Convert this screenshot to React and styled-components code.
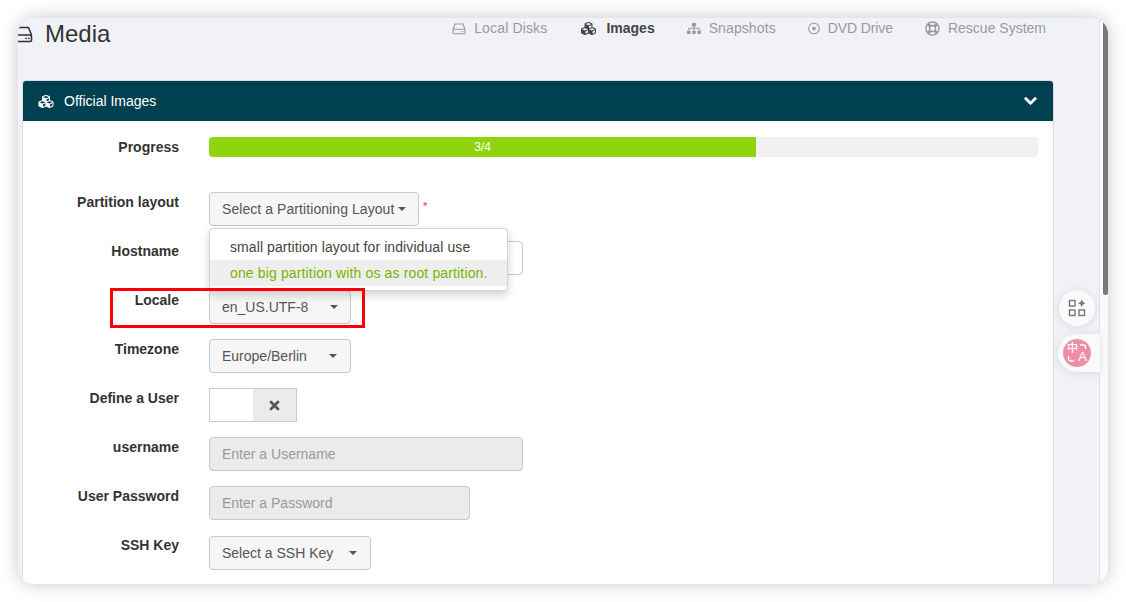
import React from 'react';
import styled, { createGlobalStyle } from 'styled-components';
import { FaCubes, FaSitemap, FaRegDotCircle, FaRegLifeRing, FaChevronDown } from 'react-icons/fa';

const Global = createGlobalStyle`
  html, body { margin: 0; padding: 0; background: #fff; overflow: hidden; }
  body { font-family: "Liberation Sans", Arial, sans-serif; font-size: 14px; color: #333; }
`;

const Stage = styled.div`
  padding: 18px;
  height: 566px;
`;
const Window = styled.div`
  position: relative;
  width: 1090px;
  height: 566px;
  display: flex;
  overflow: hidden;
  border-radius: 16px;
  background: #f1f2f7;
  box-shadow: 0 0 18px rgba(0, 0, 0, 0.22);
`;
const Main = styled.main`
  flex: 1;
  min-width: 0;
  padding-left: 5px;
  padding-right: 46px;
  border-right: 1px solid #e2e3e8;
`;
const Track = styled.div`
  width: 8px;
  background: #fafafa;
  display: flex;
  justify-content: flex-end;
`;
const Thumb = styled.div`
  width: 5px;
  height: 277px;
  background: #787878;
  border-radius: 0 0 3px 3px;
`;
const TopBar = styled.header`
  height: 63px;
  display: flex;
  align-items: flex-start;
  justify-content: space-between;
  margin-right: -46px;
  padding-right: 53px;
`;
const Title = styled.h1`
  margin: 0 0 0 -10px;
  padding-top: 2px;
  display: flex;
  align-items: center;
  gap: 12px;
  font-size: 24px;
  line-height: 28px;
  font-weight: 400;
  color: #333;
  svg { width: 20px; height: 20px; }
`;
const Tabs = styled.nav`
  display: flex;
  gap: 32px;
  padding-top: 2px;
`;
const Tab = styled.span`
  display: flex;
  align-items: center;
  gap: 8px;
  height: 16px;
  font-size: 14px;
  line-height: 16px;
  letter-spacing: ${p => p.$ls || 0}px;
  font-weight: ${p => (p.$active ? 700 : 400)};
  color: ${p => (p.$active ? '#444' : '#9a9a9a')};
  svg { width: ${p => p.$iw}px; height: 15px; }
`;
const Panel = styled.section`
  background: #fff;
  border-radius: 3px 3px 0 0;
  box-shadow: 0 0 0 1px #dcdde3;
  height: 503px;
`;
const PanelHead = styled.div`
  height: 40px;
  background: #004050;
  color: #fff;
  border-radius: 3px 3px 0 0;
  display: flex;
  align-items: center;
  padding: 0 15px 0 14px;
  gap: 9px;
  font-size: 14px;
  svg { width: 18px; height: 15px; }
`;
const Chevron = styled(FaChevronDown)`
  margin-left: auto;
  && { width: 15px; height: 14px; }
  stroke: #fff;
  stroke-width: 30px;
`;
const PanelBody = styled.div`
  padding: 16px 15px 0 0;
  display: flex;
  flex-direction: column;
  gap: 15px;
`;
const Row = styled.div`
  display: grid;
  grid-template-columns: 156px 1fr;
  column-gap: 30px;
  height: ${p => (p.$h ? p.$h : 34)}px;
  margin-bottom: ${p => p.$mb || 0}px;
  position: relative;
`;
const Label = styled.label`
  text-align: right;
  font-weight: 700;
  font-size: 14px;
  line-height: 20px;
  color: #333;
`;
const Bar = styled.div`
  height: 20px;
  background: #f1f1f1;
  border-radius: 4px;
  overflow: hidden;
`;
const BarFill = styled.div`
  height: 100%;
  background: #8fd40c;
  color: #fff;
  font-size: 12px;
  line-height: 20px;
  text-align: center;
`;
const Control = styled.div`
  display: flex;
  align-items: flex-start;
  gap: 4px;
  position: relative;
  padding-top: ${p => p.$pt || 0}px;
`;
const Select = styled.div`
  box-sizing: border-box;
  width: ${p => p.$w}px;
  height: 34px;
  display: flex;
  align-items: center;
  justify-content: space-between;
  padding: 0 ${p => p.$pr || 12}px 0 12px;
  background: #f6f6f6;
  border: 1px solid #c8c8c8;
  border-radius: 4px;
  color: #555;
  font-size: 14px;
  letter-spacing: ${p => p.$ls || 0}px;
`;
const Caret = styled.i`
  width: 0;
  height: 0;
  border-left: 4px solid transparent;
  border-right: 4px solid transparent;
  border-top: 4px solid #555;
`;
const Star = styled.span`
  color: #e33;
  font-size: 11px;
  line-height: 28px;
`;
const Input = styled.div`
  box-sizing: border-box;
  width: ${p => p.$w}px;
  height: 34px;
  padding: 0 12px;
  display: flex;
  align-items: center;
  background: ${p => (p.$disabled ? '#ebebeb' : '#fff')};
  border: 1px solid #c8c8c8;
  border-radius: 4px;
  color: #999;
  font-size: 14px;
`;
const Toggle = styled.div`
  box-sizing: border-box;
  width: 88px;
  height: 34px;
  border: 1px solid #ccc;
  display: flex;
  background: #fff;
`;
const ToggleOff = styled.div`
  margin-left: auto;
  width: 43px;
  background: #ebebeb;
  display: flex;
  align-items: center;
  justify-content: center;
`;
const Menu = styled.ul`
  position: absolute;
  z-index: 3;
  left: 0;
  top: 36px;
  box-sizing: border-box;
  width: 299px;
  height: 63px;
  margin: 0;
  padding: 5px 0;
  list-style: none;
  background: #fff;
  border: 1px solid #d4d4d4;
  border-radius: 4px;
  box-shadow: 0 4px 10px rgba(0, 0, 0, 0.18);
`;
const MenuItem = styled.li`
  height: 26px;
  line-height: 26px;
  padding-left: 20px;
  font-size: 14px;
  letter-spacing: ${p => (p.$active ? 0.14 : 0.09)}px;
  white-space: nowrap;
  color: ${p => (p.$active ? '#76b500' : '#444')};
  background: ${p => (p.$active ? '#eeeeee' : 'transparent')};
`;
const Annotation = styled.div`
  position: absolute;
  z-index: 4;
  left: 92px;
  top: 270px;
  width: 255px;
  height: 40px;
  box-sizing: border-box;
  border: 3px solid #f00;
  pointer-events: none;
`;
const Floating = styled.div`
  position: absolute;
  z-index: 5;
  left: 1041px;
  top: 272px;
  width: 36px;
  height: 36px;
  border-radius: 50%;
  background: #fafafb;
  box-shadow: 0 1px 8px rgba(0, 0, 0, 0.1);
  display: flex;
  align-items: center;
  justify-content: center;
`;
const Translate = styled.div`
  position: absolute;
  z-index: 5;
  left: 1040px;
  top: 316px;
  width: 42px;
  height: 38px;
  border-radius: 19px 0 0 19px;
  background: #fafafb;
  box-shadow: 0 1px 8px rgba(0, 0, 0, 0.1);
  display: flex;
  align-items: center;
  padding-left: 5px;
  box-sizing: border-box;
`;
const Badge = styled.div`
  position: relative;
  width: 28px;
  height: 28px;
  border-radius: 50%;
  background: #ee8fa9;
  color: #fff;
  line-height: 1;
  svg { position: absolute; inset: 0; }
`;
const BadgeHan = styled.span`
  position: absolute;
  left: 4px;
  top: 3px;
  font-size: 11px;
  font-weight: 500;
  font-family: "Noto Sans CJK SC", sans-serif;
`;
const BadgeLatin = styled.span`
  position: absolute;
  right: 4px;
  bottom: 4px;
  font-size: 13px;
  font-weight: 400;
`;

const HddIcon = () => (
  <svg viewBox="0 0 20 20" fill="none" stroke="currentColor" strokeWidth="1.6">
    <path d="M1.5 11 L4.5 3.5 H15.5 L18.5 11" />
    <rect x="1.5" y="11" width="17" height="6.5" rx="1.2" />
    <circle cx="13" cy="14.3" r="0.9" fill="currentColor" stroke="none" />
    <circle cx="15.8" cy="14.3" r="0.9" fill="currentColor" stroke="none" />
  </svg>
);

const tabs = [
  [HddIcon, 'Local Disks', 14, false, 0.15],
  [FaCubes, 'Images', 19, true, 0],
  [FaSitemap, 'Snapshots', 14, false, 0.1],
  [FaRegDotCircle, 'DVD Drive', 12, false, -0.1],
  [FaRegLifeRing, 'Rescue System', 15, false, 0],
];

export default function App() {
  return (
    <Stage>
      <Global />
      <Window>
        <Main>
          <TopBar>
            <Title><HddIcon />Media</Title>
            <Tabs>
              {tabs.map(([Icon, text, iw, active, ls]) => (
                <Tab key={text} $active={active} $iw={iw} $ls={ls}><Icon />{text}</Tab>
              ))}
            </Tabs>
          </TopBar>
          <Panel>
            <PanelHead><FaCubes />Official Images<Chevron /></PanelHead>
            <PanelBody>
              <Row $h={20} $mb={20}>
                <Label>Progress</Label>
                <Bar><BarFill style={{ width: '66%' }}>3/4</BarFill></Bar>
              </Row>
              <Row>
                <Label>Partition layout</Label>
                <Control>
                  <Select $w={210} $pr={12} $ls={0.07}>Select a Partitioning Layout<Caret /></Select>
                  <Star>*</Star>
                  <Menu>
                    <MenuItem>small partition layout for individual use</MenuItem>
                    <MenuItem $active>one big partition with os as root partition.</MenuItem>
                  </Menu>
                </Control>
              </Row>
              <Row>
                <Label>Hostname</Label>
                <Control><Input $w={314} /></Control>
              </Row>
              <Row>
                <Label>Locale</Label>
                <Control><Select $w={142} $pr={12}>en_US.UTF-8<Caret /></Select></Control>
              </Row>
              <Row>
                <Label>Timezone</Label>
                <Control><Select $w={142} $pr={13}>Europe/Berlin<Caret /></Select></Control>
              </Row>
              <Row>
                <Label>Define a User</Label>
                <Control>
                  <Toggle>
                    <ToggleOff>
                      <svg width="11" height="11" viewBox="0 0 11 11" stroke="#555" strokeWidth="2.8" strokeLinecap="round">
                        <path d="M2 2 L9 9 M9 2 L2 9" />
                      </svg>
                    </ToggleOff>
                  </Toggle>
                </Control>
              </Row>
              <Row>
                <Label>username</Label>
                <Control><Input $w={314} $disabled>Enter a Username</Input></Control>
              </Row>
              <Row>
                <Label>User Password</Label>
                <Control><Input $w={261} $disabled>Enter a Password</Input></Control>
              </Row>
              <Row>
                <Label>SSH Key</Label>
                <Control $pt={1}><Select $w={162} $pr={13}>Select a SSH Key<Caret /></Select></Control>
              </Row>
            </PanelBody>
          </Panel>
        </Main>
        <Track><Thumb /></Track>
        <Annotation />
        <Floating>
          <svg width="18" height="18" viewBox="0 0 18 18" fill="none" stroke="#777" strokeWidth="1.4">
            <rect x="1.5" y="1.5" width="5.5" height="5.5" />
            <rect x="1.5" y="11" width="5.5" height="5.5" />
            <rect x="11" y="11" width="5.5" height="5.5" />
            <path d="M13.7 0.5 L15 3 L17.5 4.2 L15 5.5 L13.7 8 L12.5 5.5 L10 4.2 L12.5 3 Z" fill="#777" stroke="none" />
          </svg>
        </Floating>
        <Translate>
          <Badge>
            <svg width="28" height="28" viewBox="0 0 28 28" fill="none" stroke="#fff" strokeWidth="1.3">
              <path d="M17 6 H20.5 Q22.5 6 22.5 8.5 V10" />
              <path d="M5.5 17 V19.5 Q5.5 22 8 22 H11" />
            </svg>
            <BadgeHan>中</BadgeHan>
            <BadgeLatin>A</BadgeLatin>
          </Badge>
        </Translate>
      </Window>
    </Stage>
  );
}
